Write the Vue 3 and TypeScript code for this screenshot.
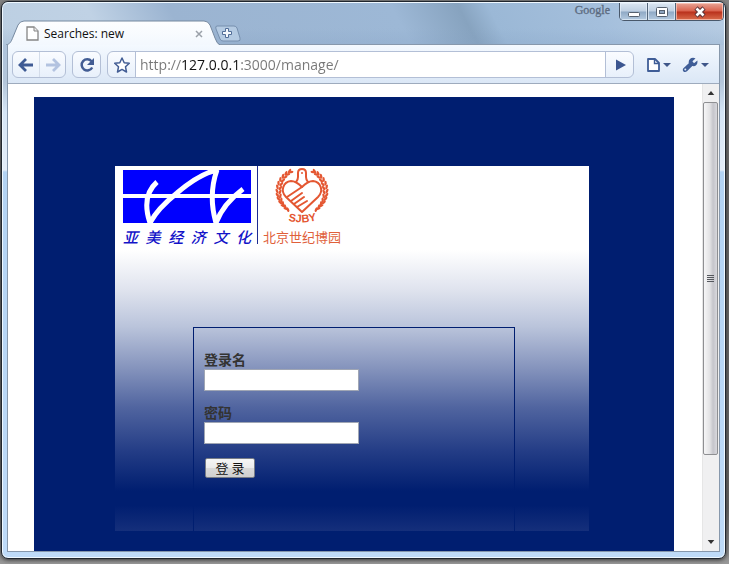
<script setup lang="ts">
import { ref } from 'vue'

const address = ref('http://127.0.0.1:3000/manage/')
const username = ref('')
const password = ref('')
const company = Array.from('亚美经济文化')

interface Leaf {
  x: number
  y: number
  angle: number
}

// Two mirrored arcs of grain leaves that frame the emblem.
const leaves: Leaf[] = []
for (let i = 0; i < 12; i++) {
  const turn = -60 + i * 10
  const t = turn * (Math.PI / 180)
  const y = 25 + 23 * Math.sin(t)
  const outer = 25 * Math.cos(t)
  const inner = 22 * Math.cos(t)
  leaves.push({ x: 28 + outer, y, angle: turn + 25 })
  leaves.push({ x: 28 + inner, y: y + 1, angle: turn - 25 })
  leaves.push({ x: 28 - outer, y, angle: -turn - 25 })
  leaves.push({ x: 28 - inner, y: y + 1, angle: -turn + 25 })
}
</script>

<template>
  <div class="desktop">
    <div class="window">
      <header class="titlebar">
        <div class="tab">
          <svg class="tab-shape" viewBox="0 0 214 25" aria-hidden="true">
            <defs>
              <linearGradient id="tabFill" x1="0" y1="0" x2="0" y2="1">
                <stop offset="0" stop-color="#fdfeff" />
                <stop offset="1" stop-color="#f3f8fe" />
              </linearGradient>
            </defs>
            <path
              d="M0 25C4 24 5 22 7 17L12 5Q14 1 18 1H198Q202 1 204 5L209 18Q211 24 214 25Z"
              fill="url(#tabFill)"
            />
            <path
              d="M0 25C4 24 5 22 7 17L12 5Q14 1 18 1H198Q202 1 204 5L209 18Q211 24 214 25"
              fill="none"
              stroke="#75889f"
            />
          </svg>
          <svg class="tab-icon" viewBox="0 0 13 15" aria-hidden="true">
            <path d="M1 1H8L12 5V14H1Z" fill="#fff" stroke="#858585" stroke-width="1.3" />
            <path d="M8 1V5H12" fill="#eee" stroke="#858585" />
          </svg>
          <span class="tab-title">Searches: new</span>
          <button class="tab-close" type="button" aria-label="Close tab">
            <svg viewBox="0 0 8 8"><path d="M1 1L7 7M7 1L1 7" stroke="#9ba1a9" stroke-width="1.5" /></svg>
          </button>
        </div>
        <button class="new-tab" type="button" aria-label="New tab">
          <svg viewBox="0 0 28 17">
            <path
              d="M3 1H20Q22 1 23 3L26 13Q27 16 24 16H9Q7 16 6 14L2 4Q1 1 3 1Z"
              fill="#b4cae2"
              stroke="#768fae"
            />
            <path
              d="M11.5 3.500H14.5V6.500H17.5V9.500H14.5V12.500H11.5V9.500H8.5V6.500H11.5Z"
              fill="#f4f8fd"
              stroke="#526e98"
            />
          </svg>
        </button>
        <span class="brand">Google</span>
        <div class="controls">
          <button class="control" type="button" aria-label="Minimize">
            <svg viewBox="0 0 14 12"><rect x="1.5" y="6.5" width="11" height="4" rx="1" fill="#fff" stroke="#56616f" /></svg>
          </button>
          <button class="control" type="button" aria-label="Maximize">
            <svg viewBox="0 0 14 12">
              <rect x="1.5" y="1.5" width="11" height="9" rx="1" fill="#fff" stroke="#56616f" />
              <rect x="4.5" y="4.5" width="5" height="3" fill="#8da4bf" stroke="#56616f" />
            </svg>
          </button>
          <button class="control close" type="button" aria-label="Close">
            <svg viewBox="0 0 14 12">
              <path d="M3 2L11 10M11 2L3 10" stroke="#5d3438" stroke-width="4.6" />
              <path d="M3.5 2.5L10.5 9.500M10.5 2.500L3.5 9.500" stroke="#fff" stroke-width="2.6" />
            </svg>
          </button>
        </div>
      </header>

      <div class="client">
        <nav class="toolbar" aria-label="Navigation">
          <div class="box history">
            <button type="button" aria-label="Back">
              <svg class="glyph" viewBox="0 0 16 16">
                <path d="M8 2L2 8L8 14M2.500 8H15" fill="none" stroke="#3e5a94" stroke-width="2.8" />
              </svg>
            </button>
            <button type="button" aria-label="Forward">
              <svg class="glyph" viewBox="0 0 16 16">
                <path d="M8 2L14 8L8 14M13.500 8H1" fill="none" stroke="#b3c3e0" stroke-width="2.8" />
              </svg>
            </button>
          </div>
          <div class="box reload">
            <button type="button" aria-label="Reload">
              <svg class="glyph" viewBox="0 0 16 16">
                <path d="M12.500 4.200A5.600 5.600 0 1 0 13.200 10.500" fill="none" stroke="#435d94" stroke-width="2.5" />
                <path d="M15 1V8H8Z" fill="#435d94" />
              </svg>
            </button>
          </div>
          <form class="box omnibox" @submit.prevent>
            <button type="button" class="star" aria-label="Bookmark">
              <svg class="glyph" viewBox="0 0 16 16">
                <path
                  d="M8 1L10.200 5.700L15.300 6.300L11.500 9.800L12.500 15L8 12.400L3.500 15L4.500 9.800L.7 6.300L5.800 5.700Z"
                  fill="#fff"
                  stroke="#435d94"
                  stroke-width="1.5"
                  stroke-linejoin="round"
                />
              </svg>
            </button>
            <div class="address">
              <input v-model="address" type="text" aria-label="Address" spellcheck="false" />
            </div>
            <button type="submit" class="go" aria-label="Go">
              <svg class="glyph" viewBox="0 0 16 16"><path d="M4 2.500L14 8L4 13.500Z" fill="#3c5690" /></svg>
            </button>
          </form>
          <div class="menus">
            <button type="button" aria-label="Page menu">
              <svg class="menu-icon" viewBox="0 0 26 16">
                <path d="M2 2H9L13 6V14H2Z" fill="#fff" stroke="#3f5d97" stroke-width="1.8" stroke-linejoin="round" />
                <path d="M8.500 2V6.500H13" fill="none" stroke="#3f5d97" stroke-width="1.4" />
                <path d="M17 6H25L21 10Z" fill="#3f5689" />
              </svg>
            </button>
            <button type="button" aria-label="Tools menu">
              <svg class="menu-icon wide" viewBox="0 0 28 16">
                <path
                  d="M13.500 1.500L10.400 4.300L12 6.200L15.400 3.600C16 7.600 13.300 9.800 10.300 9L5 14.300C2.500 16.300 -.5 13.800 1.400 11.300L6.800 6.300C5.900 2.700 9.700 -.6 13.500 1.500Z"
                  fill="#3f5d97"
                />
                <circle cx="3.300" cy="12.600" r="1" fill="#dce8f7" />
                <path d="M19 6H27L23 10Z" fill="#3f5689" />
              </svg>
            </button>
          </div>
        </nav>

        <div class="view">
          <main class="page">
            <div class="canvas">
              <section class="panel">
                <div class="logos">
                  <div class="company">
                    <svg class="company-mark" viewBox="0 0 128 53" aria-hidden="true">
                      <rect width="128" height="53" fill="#0000fe" />
                      <path d="M0 26H128" stroke="#fff" stroke-width="4" />
                      <path
                        d="M34 12Q18 26 27 53Q34 39 54 23Q76 4 94 0Q85 25 93 53Q100 34 120 19"
                        fill="none"
                        stroke="#fff"
                        stroke-width="5"
                        stroke-linejoin="bevel"
                      />
                    </svg>
                    <div class="company-name">
                      <span v-for="ch in company" :key="ch">{{ ch }}</span>
                    </div>
                  </div>
                  <div class="partner">
                    <svg class="emblem" viewBox="0 0 56 62" aria-hidden="true">
                      <g fill="#e45732">
                        <ellipse
                          v-for="(leaf, i) in leaves"
                          :key="i"
                          :cx="leaf.x"
                          :cy="leaf.y"
                          rx="1.2"
                          ry="2.5"
                          :transform="`rotate(${leaf.angle} ${leaf.x} ${leaf.y})`"
                        />
                      </g>
                      <g fill="none" stroke="#e45732" stroke-width="2" stroke-linecap="round" stroke-linejoin="round">
                        <path
                          d="M28 46L12 31C6 25 9 16 17 15C22 15 25 18 28 21C31 18 34 15 39 15C47 16 50 25 44 31L28 46"
                        />
                        <path d="M22 16Q24 14 24 11V7Q24 3 28 3Q32 3 32 7V11Q32 14 34 16" />
                        <path d="M13 31L22 25M17 35L28 27M20 38L30 31M23 41L33 35M22 25L28 21" />
                      </g>
                      <circle cx="28" cy="7" r="1" fill="#e45732" />
                      <path id="sjbyArc" d="M7 53Q28 60 50 52" fill="none" />
                      <text class="sjby"><textPath href="#sjbyArc" startOffset="50%" text-anchor="middle">SJBY</textPath></text>
                    </svg>
                    <div class="partner-name">北京世纪博园</div>
                  </div>
                </div>
                <form class="login" @submit.prevent>
                  <label for="username">登录名</label>
                  <input id="username" v-model="username" type="text" />
                  <label for="password">密码</label>
                  <input id="password" v-model="password" type="password" />
                  <button type="submit">登 录</button>
                </form>
              </section>
            </div>
          </main>
          <div class="scrollbar" aria-hidden="true">
            <svg class="arrow" viewBox="0 0 17 18"><path d="M5 11L8.500 7L12 11Z" fill="#333" /></svg>
            <div class="track">
              <div class="thumb"><i></i><i></i><i></i><i></i></div>
            </div>
            <svg class="arrow" viewBox="0 0 17 18"><path d="M5 7L8.500 11L12 7Z" fill="#333" /></svg>
          </div>
        </div>
      </div>
    </div>
  </div>
</template>

<style>
body {
  margin: 0;
}
</style>

<style scoped>
* {
  box-sizing: border-box;
}

button {
  font: inherit;
  border: 0;
  padding: 0;
  background: none;
}

svg {
  display: block;
}

.desktop {
  display: flex;
  height: 100vh;
  padding: 1px 3px 5px 1px;
  background: linear-gradient(#858585, #6a6a6a 30%, #666 90%, #999);
  font-family: "Noto Sans", "Noto Sans CJK SC", sans-serif;
}

.window {
  flex: 1;
  min-width: 0;
  display: flex;
  flex-direction: column;
  border: 1px solid #20262e;
  border-radius: 7px;
  box-shadow: inset 0 0 0 1px #eff8ff, 0 1px 4px #333;
  background: linear-gradient(#a9c1dc 0, #b4c6da 80px, #d5e5f5 110px, #e4edf8 168px, #b3d3f3 170px, #bfdbf8 100%);
}

.titlebar {
  flex: none;
  display: flex;
  align-items: flex-end;
  height: 43px;
  margin: 0 1px;
  padding-left: 3px;
  border-top: 1px solid #eff8ff;
  border-radius: 6px 6px 0 0;
  background:
    linear-gradient(#fff0 60%, #7f9cbf33),
    linear-gradient(62deg, #bccfe2 0, #c0d2e5 14%, #9bb4d1 25%, #9db8d6 55%, #87a3bf 64%, #9bb8d6 68%, #a4bfdc 82%, #b8cde3 100%);
}

.tab {
  position: relative;
  flex: none;
  display: flex;
  align-items: center;
  width: 214px;
  height: 25px;
  padding: 2px 17px 0 20px;
}

.tab-shape {
  position: absolute;
  inset: 0;
  width: 100%;
  height: 100%;
}

.tab-icon {
  position: relative;
  width: 13px;
  height: 15px;
}

.tab-title {
  position: relative;
  flex: 1;
  padding-left: 5px;
  font-family: "Open Sans", sans-serif;
  font-size: 12px;
  line-height: 16px;
  white-space: nowrap;
  color: #111;
}

.tab-close {
  position: relative;
  width: 8px;
}

.new-tab {
  width: 28px;
  height: 17px;
  margin: 0 0 3px -6px;
}

.brand {
  align-self: flex-start;
  margin-left: auto;
  padding-right: 9px;
  font-family: "Liberation Serif", serif;
  font-size: 12px;
  line-height: 14px;
  color: #5c6b80;
  -webkit-text-stroke: 0.3px #5c6b80;
}

.controls {
  align-self: flex-start;
  display: flex;
  height: 18px;
  border: 1px solid #49586a;
  border-top: 0;
  border-radius: 0 0 5px 5px;
  overflow: hidden;
}

.control {
  display: grid;
  place-items: center;
  width: 28px;
  border-right: 1px solid #53657a;
  background: linear-gradient(#dbe6f1, #bfd0e2 48%, #8fa9c5 52%, #b4cae0);
  box-shadow: inset 0 0 0 1px #e8f1faaa;
}

.control svg {
  width: 14px;
  height: 12px;
}

.control.close {
  width: 47px;
  border-right: 0;
  background: linear-gradient(#e8a596, #d9614c 48%, #b9301b 52%, #d96c4c);
  box-shadow: inset 0 0 0 1px #ffd4c7aa;
}

.client {
  flex: 1;
  min-height: 0;
  display: flex;
  flex-direction: column;
  margin: 0 6px 7px;
  box-shadow: 0 0 0 1px #8798ac;
}

.toolbar {
  flex: none;
  display: flex;
  gap: 6px;
  height: 39px;
  padding: 6px 5px 5px 4px;
  border-bottom: 1px solid #9eabbd;
  background: linear-gradient(#f4f9ff, #dbe7f6);
}

.box {
  display: flex;
  border: 1px solid #b3bfd6;
  border-radius: 6px;
  overflow: hidden;
  background: linear-gradient(#fafcff, #e8f0fb);
}

.box button {
  flex: none;
  display: grid;
  place-items: center;
  width: 27px;
}

.history button {
  width: 26px;
}

.history button + button {
  border-left: 1px solid #d3dcea;
}

.glyph {
  width: 16px;
  height: 16px;
}

.omnibox {
  flex: 1;
  min-width: 0;
}

.address {
  flex: 1;
  min-width: 0;
  display: flex;
  border: 1px solid #b3bfd6;
  border-width: 0 1px;
  background: #fff;
}

.address input {
  flex: 1;
  min-width: 0;
  border: 0;
  padding: 0 0 0 4px;
  outline: 0;
  font-family: "Open Sans", sans-serif;
  font-size: 14px;
  color: #777;
  background: linear-gradient(90deg, #777 46px, #111 46px 103px, #777 103px);
  background-clip: text;
  -webkit-background-clip: text;
  -webkit-text-fill-color: transparent;
}

.menus {
  flex: none;
  display: flex;
}

.menus button {
  display: grid;
  place-items: center;
  width: 37px;
}

.menu-icon {
  width: 26px;
  height: 16px;
}

.menu-icon.wide {
  width: 28px;
}

.view {
  flex: 1;
  min-height: 0;
  display: flex;
  background: #fff;
}

.page {
  flex: 1;
  min-width: 0;
  display: flex;
  padding: 13px 28px 0 26px;
}

.canvas {
  flex: 1;
  min-width: 0;
  display: flex;
  padding: 69px 85px 20px 81px;
  background: #001e70;
}

.panel {
  flex: 1;
  min-width: 0;
  display: flex;
  flex-direction: column;
  background: linear-gradient(#fff 23%, #dfe3ee 34%, #bac4db 44%, #8291bb 56%, #5165a0 66%, #243d86 78%, #001e70 89%, #001e70 93%, #152f7b 100%);
}

.logos {
  display: flex;
  height: 80px;
  padding-left: 8px;
}

.company {
  width: 135px;
  height: 78px;
  padding: 4px 6px 0 0;
  border-right: 1px solid #1d2b91;
}

.company-mark {
  width: 128px;
  height: 53px;
}

.company-name {
  display: flex;
  justify-content: space-between;
  width: 128px;
  padding-top: 5px;
  font-family: "Noto Sans CJK SC", sans-serif;
  font-size: 15px;
  font-style: italic;
  font-weight: 500;
  line-height: 18px;
  color: #1414c8;
}

.partner {
  padding-left: 5px;
}

.emblem {
  width: 56px;
  height: 62px;
  margin-left: 11px;
}

.sjby {
  font-family: "Liberation Sans", sans-serif;
  font-size: 11px;
  font-weight: 700;
  fill: #e45732;
}

.partner-name {
  font-family: "Noto Sans CJK SC", sans-serif;
  font-size: 13px;
  line-height: 18px;
  color: #e0603a;
}

.login {
  flex: 1;
  display: flex;
  flex-direction: column;
  align-items: flex-start;
  margin: 81px 74px 0 78px;
  padding: 22px 10px 0;
  border: 1px solid #001e70;
  border-bottom: 0;
  font-family: "Noto Sans CJK SC", sans-serif;
}

.login label {
  font-size: 14px;
  font-weight: 700;
  line-height: 19px;
  color: #333;
}

.login input {
  width: 155px;
  height: 22px;
  margin-bottom: 12px;
  padding: 1px 3px;
  border: 1px solid #a0a6b4;
  background: #fff;
}

.login button {
  width: 50px;
  height: 20px;
  margin: 2px 1px;
  border: 1px solid #777c86;
  border-radius: 2px;
  background: linear-gradient(#f6f6f6, #ebebeb 48%, #d9d9d9 52%, #cfcfcf);
  font-size: 13px;
  line-height: 18px;
  color: #111;
}

.scrollbar {
  flex: none;
  display: flex;
  flex-direction: column;
  width: 17px;
  background: #f0f0f1;
  border-left: 1px solid #e6e6e6;
}

.arrow {
  flex: none;
  height: 18px;
}

.track {
  flex: 1;
}

.thumb {
  display: flex;
  flex-direction: column;
  align-items: center;
  justify-content: center;
  gap: 1px;
  width: 15px;
  height: 82%;
  border: 1px solid #8e8f92;
  border-radius: 2px;
  background: linear-gradient(90deg, #f6f6f7, #e2e2e4 45%, #c5c5cb 70%, #d8d8dd);
}

.thumb i {
  width: 7px;
  height: 1px;
  background: #55585e;
}
</style>
